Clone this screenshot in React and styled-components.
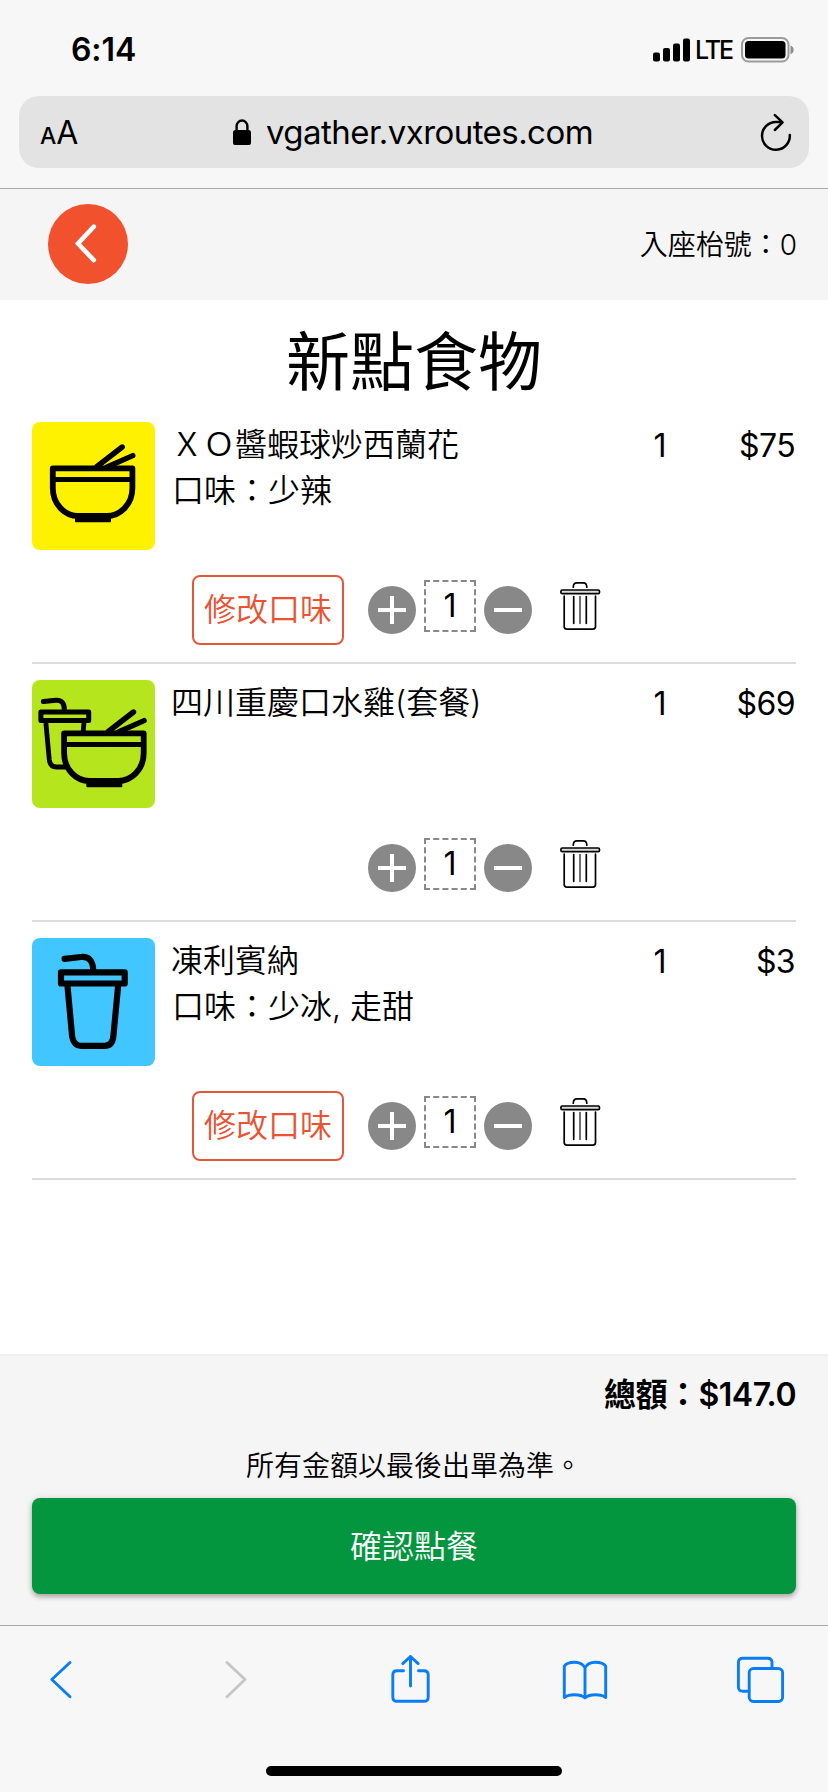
import React from "react";
import styled, { createGlobalStyle } from "styled-components";

const GlobalStyle = createGlobalStyle`
  *, *::before, *::after { box-sizing: border-box; }
  body {
    margin: 0;
    background: #fff;
    color: #000;
    font-family: Inter, "Noto Sans CJK TC", sans-serif;
  }
  button { font: inherit; color: inherit; background: none; border: 0; padding: 0; }
  svg { display: block; flex: none; }
`;

const Screen = styled.div`
  width: 828px;
  height: 1792px;
  display: flex;
  flex-direction: column;
  overflow: hidden;
  background: #fff;
`;

/* ---------- browser chrome ---------- */

const BrowserTop = styled.header`
  height: 189px;
  flex: none;
  background: #f7f7f7;
  border-bottom: 1px solid #a9abaa;
`;

const StatusBar = styled.div`
  height: 96px;
  padding: 3px 34px 0 71px;
  display: flex;
  align-items: center;
`;

const Clock = styled.span`
  flex: 1;
  padding-top: 1px;
  font-size: 32px;
  font-weight: 600;
  line-height: 40px;
  letter-spacing: -0.1px;
`;

const Network = styled.span`
  width: 50px;
  flex: none;
  padding-left: 4px;
  font-size: 25px;
  font-weight: 500;
  line-height: 32px;
  letter-spacing: -2px;
`;

const AddressBar = styled.div`
  height: 72px;
  margin: 0 19px;
  padding: 0 16px 0 21px;
  border-radius: 20px;
  background: #e3e3e3;
  display: flex;
  align-items: center;
`;

const TextSize = styled.span`
  width: 93px;
  padding-top: 4px;
  display: flex;
  align-items: baseline;
  gap: 1px;
  line-height: 40px;
`;

const Letter = styled.span`
  font-size: ${(p) => p.$size}px;
  font-weight: ${(p) => p.$weight};
  letter-spacing: -1px;
`;

const Site = styled.div`
  flex: 1;
  display: flex;
  justify-content: center;
  align-items: center;
  gap: 15px;
`;

const Host = styled.span`
  font-size: 33px;
  line-height: 40px;
  letter-spacing: -0.55px;
  white-space: nowrap;
`;

const ReloadSlot = styled.span`
  width: 100px;
  display: flex;
  justify-content: flex-end;
`;

/* ---------- page ---------- */

const PageHeader = styled.div`
  height: 111px;
  flex: none;
  padding: 0 31px 1px 48px;
  background: #f5f5f5;
  display: flex;
  align-items: center;
  justify-content: space-between;
`;

const BackButton = styled.button`
  width: 80px;
  height: 80px;
  border-radius: 50%;
  background: #f2512d;
  display: flex;
  align-items: center;
  justify-content: center;
`;

const TableNumber = styled.span`
  padding-top: 1px;
  font-size: 28px;
  line-height: 40px;
  font-weight: 350;
`;

const Main = styled.main`
  flex: 1;
  padding: 0 32px;
  font-weight: 350;
`;

const Title = styled.h1`
  margin: 0;
  height: 106px;
  padding-top: 16px;
  font-size: 64px;
  line-height: 92px;
  font-weight: 400;
  text-align: center;
`;

const Item = styled.section`
  height: 258px;
  padding-top: 16px;
  border-bottom: 2px solid #dcdcdc;
`;

const Summary = styled.div`
  height: 128px;
  display: flex;
  font-size: 32px;
  line-height: 46px;
`;

const Thumb = styled.div`
  width: 123px;
  height: 128px;
  flex: none;
  margin-right: 16px;
  border-radius: 8px;
  background: ${(p) => p.$color};
`;

const Description = styled.div`
  flex: 1;
  white-space: nowrap;
`;

const Flavour = styled.div`
  padding-left: 1px;
`;

const Quantity = styled.div`
  width: 40px;
  padding-top: 1px;
  font-weight: 400;
  text-align: center;
`;

const Price = styled.div`
  width: 116px;
  padding: 1px 1px 0 0;
  font-weight: 400;
  text-align: right;
  letter-spacing: -0.6px;
`;

const Controls = styled.div`
  height: 70px;
  margin: 25px 0 0 160px;
  display: flex;
  align-items: center;
`;

const FlavourSlot = styled.div`
  width: 176px;
`;

const FlavourButton = styled.button`
  width: 152px;
  height: 70px;
  display: block;
  border: 2px solid #e5573a;
  border-radius: 8px;
  color: #ea5231;
  font-size: 32px;
  line-height: 46px;
  white-space: nowrap;
`;

const RoundButton = styled.button`
  width: 48px;
  height: 48px;
  border-radius: 50%;
  background: #888;
`;

const Count = styled.div`
  width: 52px;
  height: 52px;
  margin: 0 8px 8px;
  border: 2px dashed #888;
  font-size: 32px;
  font-weight: 400;
  line-height: 48px;
  text-align: center;
`;

const TrashButton = styled.button`
  margin: 0 0 8px 28px;
`;

const Footer = styled.div`
  height: 271px;
  flex: none;
  padding: 16px 32px 0;
  border-top: 2px solid #efefef;
  background: #f5f5f5;
`;

const Total = styled.div`
  height: 46px;
  font-size: 32px;
  line-height: 46px;
  font-weight: 600;
  text-align: right;
  letter-spacing: -0.5px;
`;

const Note = styled.p`
  margin: 28px 0 11px;
  font-size: 28px;
  line-height: 41px;
  font-weight: 350;
  text-align: center;
`;

const ConfirmButton = styled.button`
  width: 100%;
  height: 96px;
  padding-bottom: 5px;
  border-radius: 8px;
  background: #04953f;
  color: #fff;
  font-size: 32px;
  font-weight: 350;
  box-shadow: 0 3px 5px rgba(0, 0, 0, 0.28), 0 0 8px rgba(0, 0, 0, 0.1);
`;

const BrowserBottom = styled.nav`
  height: 167px;
  flex: none;
  background: #f7f7f7;
  border-top: 1px solid #a9a9a9;
`;

const Tools = styled.div`
  padding: 26px 43px 0 36px;
  display: flex;
  justify-content: space-between;
`;

const HomeIndicator = styled.div`
  width: 296px;
  height: 10px;
  margin: 58px auto 0;
  border-radius: 5px;
  background: #000;
`;

/* ---------- drawings ---------- */

const Signal = () => (
  <svg width="38" height="24" viewBox="0 0 38 24">
    <rect x="0" y="14.5" width="7" height="9" rx="2" />
    <rect x="10" y="10" width="7" height="13.5" rx="2" />
    <rect x="20" y="5.5" width="7" height="18" rx="2" />
    <rect x="30" y="0.5" width="7" height="23" rx="2" />
  </svg>
);

const Battery = () => (
  <svg width="53" height="26" viewBox="0 0 53 26">
    <rect x="1" y="1" width="46.5" height="23.5" rx="6.5" fill="none" stroke="#9b9b9b" strokeWidth="2" />
    <rect x="4" y="4" width="40.5" height="17.5" rx="3.5" />
    <path d="M49.5 8.6q3.2 1.5 3.2 4.3t-3.2 4.3z" fill="#8e8e8e" />
  </svg>
);

const Lock = () => (
  <svg width="18" height="27" viewBox="0 0 18 27">
    <path d="M3.6 13V7.3a5.4 5.8 0 0 1 10.8 0V13" fill="none" stroke="#000" strokeWidth="2.4" />
    <rect x="0" y="11" width="18" height="15" rx="2.6" />
  </svg>
);

const Reload = () => (
  <svg width="34" height="40" viewBox="0 0 34 40" fill="none" stroke="#000" strokeWidth="2.5" strokeLinecap="round" strokeLinejoin="round">
    <path d="M30.8 23A13.9 13.9 0 1 1 16.9 10h5.6" />
    <path d="M15.8 3.2 23.6 10.4 15.8 18" />
  </svg>
);

const BackArrow = () => (
  <svg width="80" height="80" viewBox="0 0 80 80" fill="none" stroke="#fff" strokeWidth="4.6" strokeLinecap="round">
    <path d="M45.8 22.6 30 39.5 45.8 56.2" />
  </svg>
);

const bowlShape = (
  <>
    <path d="M65 44.5 90.2 25M75 45 100.8 33.6" fill="none" strokeWidth="5.4" strokeLinecap="round" />
    <path d="M20.8 46.4H100.4V66C100.4 83 87.5 94 75 94H46C33.5 94 20.8 83 20.8 66Z" strokeWidth="5.8" strokeLinejoin="round" />
    <path d="M21 57.4H100" strokeWidth="5" />
    <rect x="43" y="93" width="36" height="7.3" rx="1" fill="#000" stroke="none" />
  </>
);

const Bowl = () => (
  <svg width="123" height="128" viewBox="0 0 123 128" fill="none" stroke="#000">
    {bowlShape}
  </svg>
);

const MealSet = ({ color }) => (
  <svg width="123" height="128" viewBox="0 0 123 128" fill="none" stroke="#000">
    <path d="M11.4 21.6 24 20.2Q32.4 19.8 32.4 30" strokeWidth="5" strokeLinecap="round" />
    <rect x="8.9" y="31.9" width="47.8" height="8.6" strokeWidth="5" strokeLinejoin="round" />
    <path d="M13.9 43 17.3 80Q18.2 87 24.5 87H36M52 42 51 54" strokeWidth="4.8" />
    <g transform="translate(11.3 7)" fill={color}>
      {bowlShape}
    </g>
  </svg>
);

const Drink = () => (
  <svg width="123" height="128" viewBox="0 0 123 128" fill="none" stroke="#000">
    <path d="M32.6 20.9 49 19Q61.2 18 61.2 33" strokeWidth="6.2" strokeLinecap="round" />
    <rect x="29" y="34.3" width="63.7" height="11.2" strokeWidth="6.2" strokeLinejoin="round" />
    <path d="M35.4 47 40.2 99Q42 107.9 49 107.9H72.5Q80 107.9 81.3 99L86.2 47" strokeWidth="6.2" />
  </svg>
);

const Plus = () => (
  <svg width="48" height="48" viewBox="0 0 48 48" stroke="#fff" strokeWidth="4">
    <path d="M10 24H38M24 10V38" />
  </svg>
);

const Minus = () => (
  <svg width="48" height="48" viewBox="0 0 48 48" stroke="#fff" strokeWidth="4">
    <path d="M10 24H38" />
  </svg>
);

const Trash = () => (
  <svg width="41" height="50" viewBox="0 0 41 50" fill="none" stroke="#000" strokeWidth="1.7" strokeLinecap="round">
    <path d="M13.3 6.2C13.3 3.2 14.6 1.9 17 1.9H23.2C25.6 1.9 26.8 3.2 26.8 6.2" />
    <rect x="0.9" y="9" width="38.6" height="3.6" rx="1.4" fill="#ddd" />
    <path d="M4.2 15.2V45.5Q4.2 48.1 6.8 48.1H32.9Q35.5 48.1 35.5 45.5V15.2" />
    <path d="M13.7 15.5V42.3M26.3 15.5V42.3" />
    <path d="M20 15.5V42.3" stroke="#555" />
  </svg>
);

const ToolIcon = ({ children, color = "#0a7cf6" }) => (
  <svg width="50" height="56" viewBox="0 0 50 56" fill="none" stroke={color} strokeWidth="2.9" strokeLinecap="round" strokeLinejoin="round">
    {children}
  </svg>
);

/* ---------- data ---------- */

const items = [
  { name: "ＸＯ醬蝦球炒西蘭花", flavour: "口味：少辣", qty: 1, price: "$75", color: "#fff200", art: <Bowl /> },
  { name: "四川重慶口水雞(套餐)", qty: 1, price: "$69", color: "#b5e61d", art: <MealSet color="#b5e61d" /> },
  { name: "凍利賓納", flavour: "口味：少冰, 走甜", qty: 1, price: "$3", color: "#42c6ff", art: <Drink /> },
];

function OrderItem({ item }) {
  return (
    <Item>
      <Summary>
        <Thumb $color={item.color}>{item.art}</Thumb>
        <Description>
          {item.name}
          {item.flavour && <Flavour>{item.flavour}</Flavour>}
        </Description>
        <Quantity>{item.qty}</Quantity>
        <Price>{item.price}</Price>
      </Summary>
      <Controls>
        <FlavourSlot>{item.flavour && <FlavourButton>修改口味</FlavourButton>}</FlavourSlot>
        <RoundButton aria-label="加"><Plus /></RoundButton>
        <Count>{item.qty}</Count>
        <RoundButton aria-label="減"><Minus /></RoundButton>
        <TrashButton aria-label="刪除"><Trash /></TrashButton>
      </Controls>
    </Item>
  );
}

export default function App() {
  return (
    <>
      <GlobalStyle />
      <Screen lang="zh-Hant">
        <BrowserTop>
          <StatusBar>
            <Clock>6:14</Clock>
            <Signal />
            <Network>LTE</Network>
            <Battery />
          </StatusBar>
          <AddressBar>
            <TextSize>
              <Letter $size={23} $weight={500}>A</Letter>
              <Letter $size={32} $weight={400}>A</Letter>
            </TextSize>
            <Site>
              <Lock />
              <Host>vgather.vxroutes.com</Host>
            </Site>
            <ReloadSlot><Reload /></ReloadSlot>
          </AddressBar>
        </BrowserTop>

        <PageHeader>
          <BackButton aria-label="返回"><BackArrow /></BackButton>
          <TableNumber>入座枱號：0</TableNumber>
        </PageHeader>

        <Main>
          <Title>新點食物</Title>
          {items.map((item) => (
            <OrderItem key={item.name} item={item} />
          ))}
        </Main>

        <Footer>
          <Total>總額：$147.0</Total>
          <Note>所有金額以最後出單為準。</Note>
          <ConfirmButton>確認點餐</ConfirmButton>
        </Footer>

        <BrowserBottom>
          <Tools>
            <ToolIcon><path d="M34 10.5 15.8 27.5 34 44.7" /></ToolIcon>
            <ToolIcon color="#c6c6c6"><path d="M16 10.5 34 27.5 16 44.7" /></ToolIcon>
            <ToolIcon>
              <path d="M17.5 18.7H11Q6.8 18.7 6.8 23V45Q6.8 49.3 11 49.3H38Q42.2 49.3 42.2 45V23Q42.2 18.7 38 18.7H32.5" />
              <path d="M24.5 34V4.5M16.8 11.6 24.5 4.5 32.2 11.6" />
            </ToolIcon>
            <ToolIcon>
              <path d="M25 16Q22.5 10.3 14.5 10.3 7 10.3 4.3 14.2V45.5Q8 42.8 14.5 42.8 21.5 42.8 25 45.8 28.5 42.8 35.5 42.8 42 42.8 45.7 45.5V14.2Q43 10.3 35.5 10.3 27.5 10.3 25 16ZM25 16V45.5" />
            </ToolIcon>
            <ToolIcon>
              <path d="M13 39.3H8Q3.4 39.3 3.4 35V10.5Q3.4 6.3 8 6.3H32.5Q37 6.3 37 10.5V16" />
              <rect x="14.2" y="16.5" width="33.4" height="33" rx="4.2" />
            </ToolIcon>
          </Tools>
          <HomeIndicator />
        </BrowserBottom>
      </Screen>
    </>
  );
}
